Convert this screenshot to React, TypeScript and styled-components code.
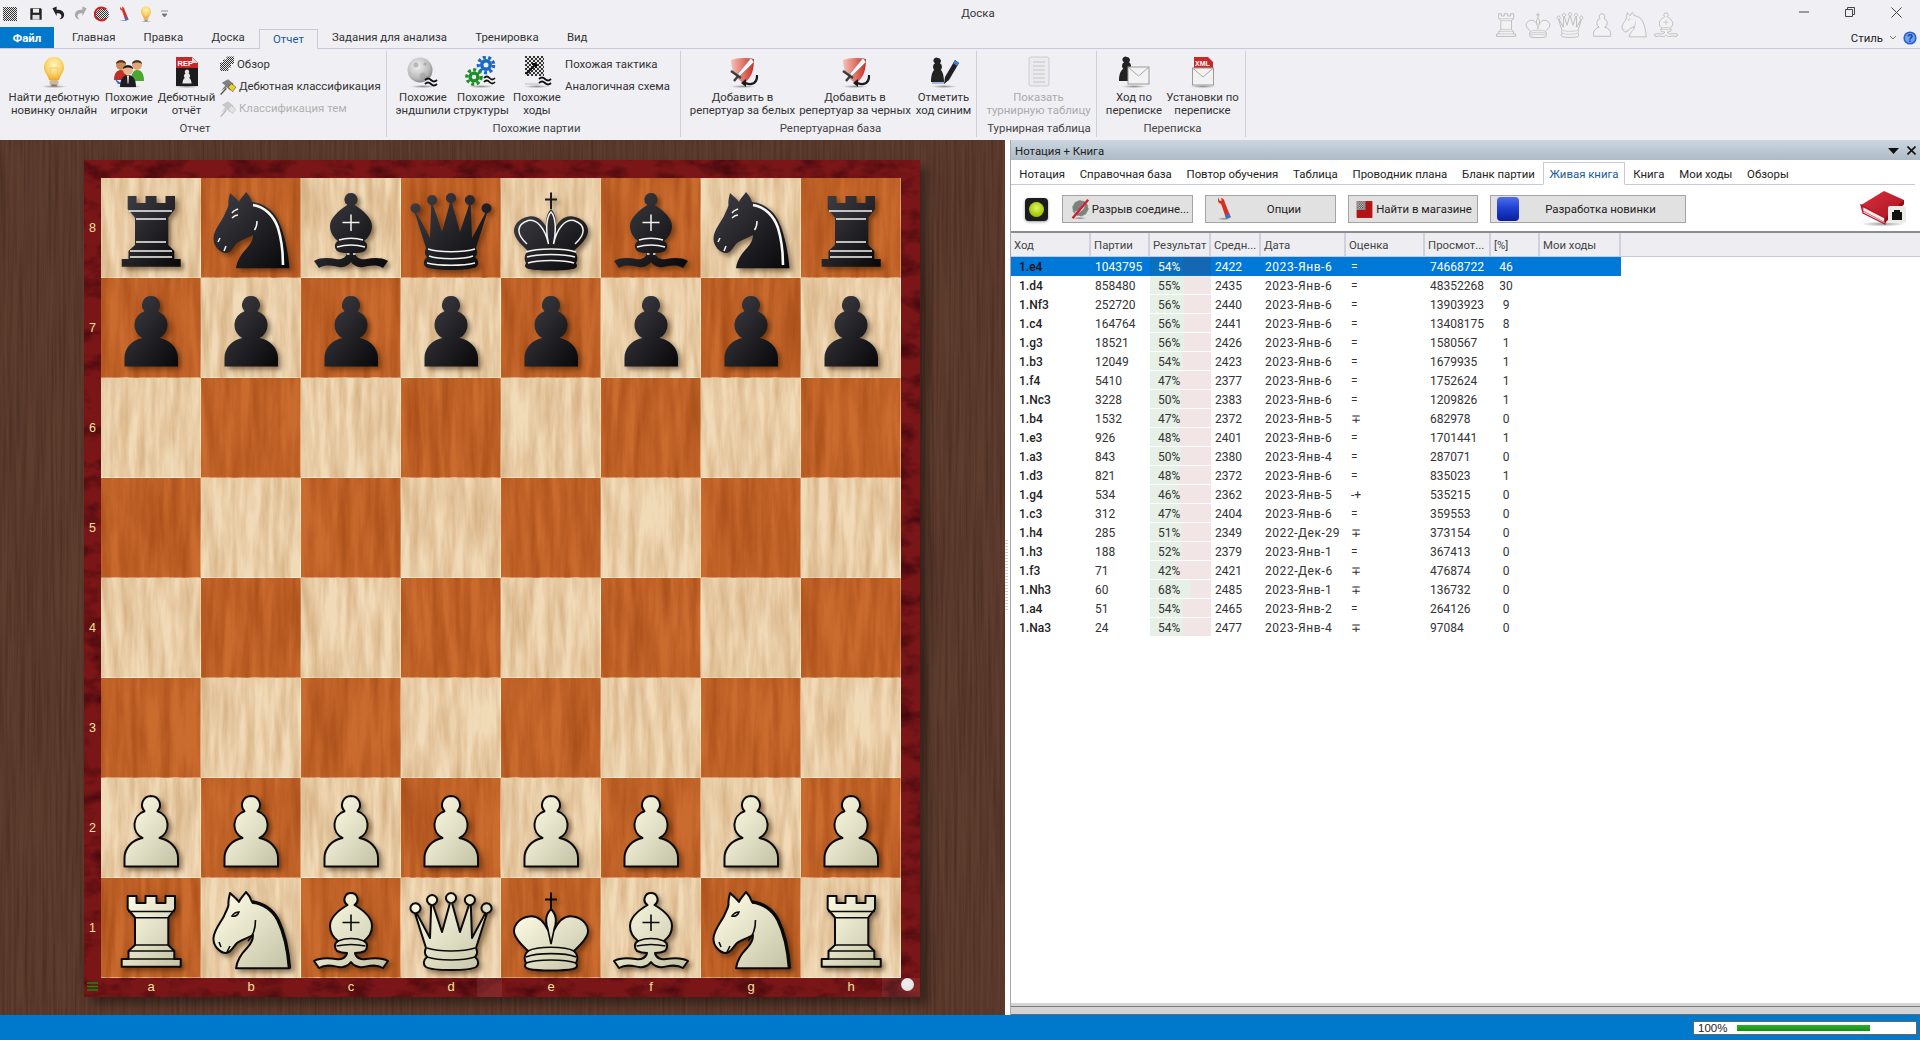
import React from "react";
import styled, { createGlobalStyle } from "styled-components";

const FONT = `Roboto, "Noto Sans", sans-serif`;
const LABEL = "11.4px";

const Global = createGlobalStyle`
  html, body { margin: 0; padding: 0; width: 100%; height: 100%; overflow: hidden; }
  body { font-family: ${FONT}; font-size: 12px; color: #222; background: #f0f0f4; }
  #root { width: 100%; height: 100%; }
`;

const Page = styled.div`display:flex;flex-direction:column;width:1920px;height:1040px;overflow:hidden;background:#f0f0f4;position:relative;`;

/* ---------- title bar ---------- */
const TitleBar = styled.div`display:grid;grid-template-columns:1fr auto 1fr;height:27px;background:#f0f0f4;align-items:center;`;
const Qat = styled.div`display:flex;align-items:center;height:24px;`;
const QatSlot = styled.div<{ $w?: number }>`width:${p => p.$w || 22}px;display:flex;justify-content:center;align-items:center;flex:none;`;
const WindowTitle = styled.div`padding-left:36px;font-size:${LABEL};color:#333;margin-top:-2px;`;
const WinControls = styled.div`display:flex;justify-content:flex-end;align-self:start;height:24px;`;
const WinBtn = styled.div`width:46.5px;display:flex;align-items:center;justify-content:center;`;
const GhostPieces = styled.div`position:absolute;left:1490px;top:8px;display:flex;`;
const Ghost = styled.svg`width:32px;height:32px;`;

/* ---------- ribbon tabs ---------- */
const TabRow = styled.div`display:flex;height:21px;align-items:flex-end;background:#f0f0f4;`;
const FileTab = styled.div`width:54px;height:21px;background:#0078cc;color:#fff;font-weight:700;font-size:${LABEL};display:flex;align-items:center;justify-content:center;`;
const TopTab = styled.div<{ $active?: boolean }>`
  height:20px;padding:0 13.1px 2px;
  display:flex;align-items:center;font-size:${LABEL};color:${p => (p.$active ? "#1a5a9c" : "#333")};
  box-sizing:border-box;position:relative;top:${p => (p.$active ? "1px" : "0")};
  ${p => p.$active ? "border:1px solid #c8c8dc;border-bottom:none;background:#f0f0f4;" : "border:1px solid transparent;"}
`;
const TabTail = styled.div`margin-left:auto;display:flex;align-items:center;gap:6px;padding-right:3px;height:21px;font-size:${LABEL};color:#222;`;

/* ---------- ribbon ---------- */
const Ribbon = styled.div`display:flex;height:92px;box-sizing:border-box;background:#f0f0f4;border-top:1px solid #c8c8dc;padding:2px 0 3px;`;
const Group = styled.div<{ $w: number; $pad?: number }>`
  width:${p => p.$w}px;box-sizing:border-box;border-right:1px solid #cfcfdc;padding-left:${p => p.$pad || 0}px;
  display:flex;flex-direction:column;
`;
const GroupBody = styled.div`flex:1;display:flex;padding-top:5px;`;
const GroupLabel = styled.div`height:18px;line-height:19px;text-align:center;font-size:${LABEL};color:#444;`;
const Big = styled.div<{ $w: number; $off?: boolean }>`
  width:${p => p.$w}px;display:flex;flex-direction:column;align-items:center;flex:none;
  color:${p => (p.$off ? "#aaa" : "#333")};
`;
const BigIcon = styled.div<{ $off?: boolean }>`height:32px;opacity:${p => (p.$off ? 0.4 : 1)};`;
const BigText = styled.div`margin-top:3px;font-size:${LABEL};line-height:13px;text-align:center;white-space:nowrap;`;
const SmallCol = styled.div`display:flex;flex-direction:column;margin-top:-3px;`;
const SmallRow = styled.div<{ $off?: boolean }>`
  height:22px;display:flex;align-items:center;gap:2px;font-size:${LABEL};white-space:nowrap;
  color:${p => (p.$off ? "#b0b0b0" : "#333")};
`;

/* ---------- main area ---------- */
const Main = styled.div`flex:1;display:flex;min-height:0;`;
const WoodArea = styled.div`width:1005px;position:relative;background:#5e3d2f;padding:20px 0 0 84px;box-sizing:border-box;overflow:hidden;`;
const Texture = styled.svg`position:absolute;left:0;top:0;width:100%;height:100%;display:block;`;
const Gutter = styled.div`width:5px;background:#fff;position:relative;`;
const Grip = styled.div`position:absolute;left:0;top:400px;width:3px;height:70px;background:repeating-linear-gradient(#ccc 0 1px,#fff 1px 3px);`;

const Frame = styled.div`
  position:relative;width:836px;height:837px;display:grid;grid-template-columns:17px 800px 19px;grid-template-rows:18px 800px 19px;
  background:#7a1618;box-shadow:7px 7px 9px rgba(0,0,0,.38);
`;
const RankRail = styled.div`grid-column:1;grid-row:2;display:grid;grid-template-rows:repeat(8,100px);position:relative;`;
const RailLabel = styled.div`display:flex;align-items:center;justify-content:center;color:#f3e29a;font-size:12.5px;font-family:"Liberation Sans",sans-serif;`;
const Board = styled.div`grid-column:2;grid-row:2;display:grid;grid-template-columns:repeat(8,100px);grid-template-rows:repeat(8,100px);position:relative;`;
const Square = styled.div<{ $light: boolean }>`
  position:relative;overflow:hidden;background:${p => (p.$light ? "#f1dab7" : "#cb6c2f")};
  box-shadow:inset -1px -1px 0 ${p => (p.$light ? "rgba(255,244,220,.9)" : "rgba(255,225,185,.65)")};
`;
const PieceSvg = styled.svg`position:absolute;left:0;top:0;width:100px;height:100px;filter:drop-shadow(3px 3px 2.5px rgba(40,20,0,.5));`;
const Corner = styled.div`grid-column:1;grid-row:3;display:flex;align-items:center;justify-content:center;position:relative;padding-bottom:2px;`;
const FileRail = styled.div`grid-column:2;grid-row:3;display:grid;grid-template-columns:repeat(8,100px);position:relative;`;
const FileLabel = styled(RailLabel)`font-size:13px;padding-bottom:3px;`;
const CornerRight = styled.div`grid-column:3;grid-row:3;position:relative;display:flex;align-items:center;justify-content:center;`;
const SideDot = styled.div`width:13px;height:13px;border-radius:50%;background:radial-gradient(circle at 45% 45%,#f2f2f2,#dcdcdc);position:absolute;left:0;top:0;`;
const Lights = styled.div`position:absolute;top:0;height:19px;background:rgba(255,255,255,.07);`;

const Panel = styled.div`flex:1;display:flex;flex-direction:column;border-left:1px solid #a8a8a8;background:#fff;min-width:0;`;
const PanelTitle = styled.div`height:20px;box-sizing:border-box;display:flex;align-items:center;background:linear-gradient(#cbd6e1,#aebbc6);padding:1px 0 0 4px;font-size:${LABEL};color:#222;`;
const PanelClose = styled.div`margin-left:auto;display:flex;align-items:center;gap:8px;padding-right:4px;`;
const PanelTabs = styled.div`height:25px;box-sizing:border-box;display:flex;align-items:flex-end;border-bottom:1px solid #c8c8dc;margin-right:5px;padding-left:1px;`;
const PanelTab = styled.div<{ $active?: boolean }>`
  height:${p => (p.$active ? "23px" : "22px")};box-sizing:border-box;padding:1px 5.85px 0;margin:0 0.5px;display:flex;align-items:center;font-size:${LABEL};white-space:nowrap;
  color:${p => (p.$active ? "#1a5a9c" : "#222")};position:relative;
  ${p => p.$active ? "border:1px solid #c8c8dc;border-bottom:1px solid #fff;top:1px;" : "border:1px solid transparent;"}
`;
const Toolbar = styled.div`height:48px;box-sizing:border-box;display:flex;align-items:center;padding:2px 14px 0;gap:12px;border-bottom:2px solid #8c8c8c;`;
const Led = styled.div`width:23px;height:23px;border-radius:4px;background:#1c1c1c;box-shadow:0 1px 3px rgba(0,0,0,.4);display:flex;align-items:center;justify-content:center;margin-right:2px;`;
const LedLamp = styled.div`width:15px;height:15px;border-radius:50%;background:radial-gradient(circle at 50% 40%,#e4f560,#9cc400 70%);`;
const ToolBtn = styled.div<{ $w: number }>`
  width:${p => p.$w}px;height:28px;box-sizing:border-box;border:1px solid #a4a4a4;background:#e1e1e1;display:flex;align-items:center;padding-left:6px;font-size:${LABEL};color:#222;
`;
const ToolBtnText = styled.div`flex:1;text-align:center;white-space:nowrap;padding-right:3px;`;
const BookWrap = styled.div`margin-left:auto;width:46px;height:38px;`;

const TABLE_COLS = "80px 59px 61px 50px 85px 79px 66px 49px 81px";
const HeadRow = styled.div`height:24px;box-sizing:border-box;display:grid;grid-template-columns:${TABLE_COLS} 1fr;background:#eeeef2;border-bottom:1px solid #c8c8dc;`;
const HeadCell = styled.div`padding-left:3px;display:flex;align-items:center;font-size:${LABEL};color:#444;border-right:2px solid #d0d0de;white-space:nowrap;overflow:hidden;&:last-child{border:none;}`;
const Rows = styled.div`flex:1;`;
const Row = styled.div<{ $sel?: boolean }>`
  height:19px;width:610px;display:grid;grid-template-columns:${TABLE_COLS};align-items:center;font-size:12px;
  background:${p => (p.$sel ? "#0078d7" : "transparent")};color:${p => (p.$sel ? "#fff" : "#333")};
`;
const Cell = styled.div<{ $pad?: number }>`padding-left:${p => p.$pad ?? 3}px;white-space:nowrap;`;
const DateCell = styled(Cell)`letter-spacing:.55px;`;
const MoveCell = styled(Cell)<{ $sel?: boolean }>`font-weight:500;color:${p => (p.$sel ? "#111" : "#222")};`;
const PctCell = styled.div`width:30px;text-align:center;`;
const ResultCell = styled.div<{ $sel?: boolean }>`
  height:18px;display:flex;position:relative;margin-bottom:1px;background:${p => (p.$sel ? "#1467b2" : "#f1e5e5")};
`;
const ResultFill = styled.div<{ $sel?: boolean }>`background:${p => (p.$sel ? "#0a70bd" : "#e6f0e6")};height:100%;`;
const ResultText = styled.div`position:absolute;left:8px;top:1px;line-height:18px;`;
const Splitter = styled.div`height:11px;background:#d4d4d4;border-top:0;position:relative;&::after{content:"";display:block;position:absolute;left:0;right:0;top:3px;height:1px;background:#7a7a7a;} border-bottom:1px solid #6a6a6a;`;

const StatusBar = styled.div`height:25px;background:#0078cc;display:flex;justify-content:flex-end;align-items:center;padding-right:3px;box-sizing:border-box;`;
const Progress = styled.div`width:224px;height:14px;box-sizing:border-box;background:#fff;border:1px solid #666;display:flex;align-items:center;padding-left:4px;font-family:"Liberation Sans",sans-serif;font-size:11.5px;color:#222;`;
const ProgressTrack = styled.div`margin-left:10px;width:133px;height:6px;background:linear-gradient(#28b028,#149014);`;

/* ---------- pieces ---------- */
type PieceKind = "p" | "r" | "n" | "b" | "q" | "k";
const PAWN = "M50 18a9 9 0 0 1 6.5 15.2a14.5 14.5 0 0 1 2 26.8C69 62 77 70 77 80V88.5H23.5V80C23.5 70 31 62 41.5 60a14.5 14.5 0 0 1 2-26.8A9 9 0 0 1 50 18Z";
const ROOK = "M26.7 18H35.5V25H44.5V18H55.5V25H64.5V18H74V31L67.3 39.5V67L73.3 73V81H79.7V88.7H20.7V81H27.5V73L34 67V39.5L26.7 31Z";
const KNIGHT = "M35 90.3C36 82 41 75 46 70C50 66 52 61 52 57C47 60 40 62 36 65C32 69 30 75 25 75C19 75 12 68 12.5 60C13 52 20 44 23 38C25 33 27 30 27.5 27C27 23 28 19 29 15C32 18 36 21 38 24C39 21 43 17 45 14C48 17 50 21 51 24C62 25 72 32 77 42C83 54 87 72 88.5 90.3Z";
const BISHOP = "M50 15a6.5 6.5 0 0 1 3.5 12C62 32 71 40 71 48C71 55 67 60 63 63C67 65 67 70 64 73C60 75 56 75 54 75C55 80 60 82 65 81C72 80 80 79 87 83L82 90C75 86 68 88 62 89C57 90 52 87 50 84C48 87 43 90 38 89C32 88 25 86 18 90L13 83C20 79 28 80 35 81C40 82 45 80 46 75C44 75 40 75 36 73C33 70 33 65 37 63C33 60 29 55 29 48C29 40 38 32 46.5 27A6.5 6.5 0 0 1 50 15Z";
const QUEEN = "M14 35.2a5 5 0 1 1 1.6-.1L29 60L30.2 26.9a5 5 0 1 1 1.8 0L41 54L49 24.9a5 5 0 1 1 2 0L59 54L68 26.9a5 5 0 1 1 1.8 0L71 60L84.4 35.1a5 5 0 1 1 1.6.1L75 70C77 74 76 77 74 79C78 82 78 87 75 89C68 93 32 93 25 89C22 87 22 82 26 79C24 77 23 74 25 70Z";
const KING = "M50 31C45 36 44 44 47 52C42 42 36 37 28 38.5C18 40 11 48 13.5 56C15 62 22 68 27 73C23 76 23 82 25 85C23 88 24 90 28 91C38 93 62 93 72 91C76 90 77 88 75 85C77 82 77 76 73 73C78 68 85 62 86.5 56C89 48 82 40 72 38.5C64 37 58 42 53 52C56 44 55 36 50 31Z";
const KING_CROSS = "M50 14.5V31M44 21.5H56";

const shape: Record<PieceKind, string> = { p: PAWN, r: ROOK, n: KNIGHT, b: BISHOP, q: QUEEN, k: KING };
const whiteDetail: Record<PieceKind, string> = {
  p: "",
  r: "M27 33.5H74M34 39.7H67.3M34 67H67.3M28 73H73M28 81H73",
  n: "M54.5 42C54.5 52 52 58 47 63M18 64L20 69M26 74L29 68M31 38C33 35 36 34 38 34C37 37 34 39 31 38Z",
  b: "M50 36.5V53M41.5 44.5H58.5M37 63C45 60 55 60 63 63M35.5 68C45 66 55 66 64.5 68",
  q: "M26 70C38 74 62 74 74 70M26 79C38 83 62 83 74 79",
  k: "M47 52L50 66L53 52M27 73C36 68 64 68 73 73M25 79C36 74.5 64 74.5 75 79M25 85C36 81 64 81 75 85",
};
const blackDetail: Record<PieceKind, string> = {
  p: "",
  r: "M28 33H71M35 41H65M35 64H65M29 73H71M29 79H71",
  n: "M31 35C33 32 35 32 37 31M56 43C56 47 55 50 53.5 52M19 60L17 64M25 68L23 73M31 40C33 38 35 37 37 37",
  b: "M50 36.5V53M41.5 44.5H58.5M38 62C45 59.5 55 59.5 62 62M36 69C45 66.5 55 66.5 64 69M46 76H48.5M52 76H54.5",
  q: "M27 71C38 74.5 62 74.5 74 71M28 78C38 81.5 62 81.5 72 78M26 85C38 88 62 88 74 85",
  k: "M26 66C16 57 14 47 27 42.5C36 41 44 50 47.5 66M74 66C84 57 86 47 73 42.5C64 41 56 50 52.5 66M47.5 66C44 50 46 38 50 34C54 38 56 50 52.5 66M25 74C36 70 64 70 75 74M26 79C36 75.5 64 75.5 74 79M27 85C36 81.5 64 81.5 73 85",
};

const Piece = ({ kind, white }: { kind: PieceKind; white: boolean }) => (
  <PieceSvg viewBox="0 0 100 100">
    {kind === "k" && <path d={KING_CROSS} fill="none" stroke={white ? "#0a0a0a" : "#1c1c20"} strokeWidth="2" />}
    <path d={shape[kind]} fill={white ? "url(#pw)" : "url(#pb)"} stroke={white ? "#0a0a0a" : "none"} strokeWidth="2" strokeLinejoin="round" />
    <path d={white ? whiteDetail[kind] : blackDetail[kind]} fill="none" stroke={white ? "#0a0a0a" : "#f4f4f0"} strokeWidth={white ? 1.6 : 1.5} />
    {white && kind === "n" && <path d="M51 24C62 25 72 32 77 42C83 54 87 72 88.5 90.3" fill="none" stroke="#0a0a0a" strokeWidth="3.4" />}
    {!white && kind === "n" && <path d="M52 27C64 29 73 38 77 50C80 60 82 75 82 87" fill="none" stroke="#f8f8f4" strokeWidth="2.6" />}
  </PieceSvg>
);

const GhostPiece = ({ kind }: { kind: PieceKind }) => (
  <Ghost viewBox="0 0 100 100">
    {kind === "k" && <path d={KING_CROSS} fill="none" stroke="#bcbcbc" strokeWidth="3" />}
    <path d={shape[kind]} fill="#f2f2f4" stroke="#bcbcbc" strokeWidth="3" strokeLinejoin="round" />
    <path d={whiteDetail[kind]} fill="none" stroke="#c4c4c4" strokeWidth="2.4" />
  </Ghost>
);

/* ---------- shared svg defs ---------- */
const DefsSvg = styled.svg`position:absolute;width:0;height:0;overflow:hidden;`;
const Defs = () => (
  <DefsSvg aria-hidden="true">
    <defs>
      <linearGradient id="pw" x1="0.1" y1="0.1" x2="1" y2="1"><stop offset="0" stopColor="#fbf9e2" /><stop offset="1" stopColor="#c4c2a4" /></linearGradient>
      <linearGradient id="pb" x1="0" y1="0" x2="1" y2="1"><stop offset="0" stopColor="#3f3f46" /><stop offset="1" stopColor="#08080a" /></linearGradient>
      <radialGradient id="bulb" cx="0.5" cy="0.35" r="0.65"><stop offset="0" stopColor="#fff4c4" /><stop offset="0.6" stopColor="#fbd56a" /><stop offset="1" stopColor="#f3a51e" /></radialGradient>
      <radialGradient id="moon" cx="0.4" cy="0.35" r="0.7"><stop offset="0" stopColor="#f2f2f2" /><stop offset="0.7" stopColor="#b8b8b8" /><stop offset="1" stopColor="#7c7c7c" /></radialGradient>
      <linearGradient id="shieldG" x1="0" y1="0" x2="1" y2="0"><stop offset="0" stopColor="#f2c4ba" /><stop offset="0.5" stopColor="#e4786c" /><stop offset="1" stopColor="#c43028" /></linearGradient>
      <linearGradient id="btnBlue" x1="0" y1="0" x2="0" y2="1"><stop offset="0" stopColor="#4f6fe8" /><stop offset="0.5" stopColor="#1c3dcf" /><stop offset="1" stopColor="#0a1f9a" /></linearGradient>
      <linearGradient id="bookG" x1="0" y1="0" x2="1" y2="1"><stop offset="0" stopColor="#d8303c" /><stop offset="1" stopColor="#a81020" /></linearGradient>
      <radialGradient id="shadowE"><stop offset="0" stopColor="rgba(0,0,0,.4)" /><stop offset="1" stopColor="rgba(0,0,0,0)" /></radialGradient>
      <pattern id="chk" width="4" height="4" patternUnits="userSpaceOnUse"><rect width="4" height="4" fill="#e6e6e6" /><rect width="2" height="2" fill="#333" /><rect x="2" y="2" width="2" height="2" fill="#333" /></pattern>
      {Array.from({ length: 64 }, (_, i) => {
        const light = (Math.floor(i / 8) + i % 8) % 2 === 0;
        return (
          <filter key={i} id={`sq${i}`} x="0" y="0" width="100%" height="100%" colorInterpolationFilters="sRGB">
            <feTurbulence type="fractalNoise" baseFrequency={light ? "0.11 0.014" : "0.10 0.01"} numOctaves="4" seed={i + 3} />
            <feColorMatrix type="matrix" values={light
              ? "0 0 0 0 0.78  0 0 0 0 0.6  0 0 0 0 0.4  1.1 0 0 0 -0.33"
              : "0 0 0 0 0.62  0 0 0 0 0.27  0 0 0 0 0.07  1.2 0 0 0 -0.32"} />
          </filter>
        );
      })}
      <filter id="woodBg" x="0" y="0" width="100%" height="100%" colorInterpolationFilters="sRGB">
        <feTurbulence type="fractalNoise" baseFrequency="0.35 0.008" numOctaves="3" seed="8" />
        <feColorMatrix type="matrix" values="0 0 0 0 0.22  0 0 0 0 0.12  0 0 0 0 0.08  0.9 0 0 0 -0.3" />
      </filter>
      <filter id="frameTex" x="0" y="0" width="100%" height="100%" colorInterpolationFilters="sRGB">
        <feTurbulence type="fractalNoise" baseFrequency="0.035 0.06" numOctaves="4" seed="12" />
        <feColorMatrix type="matrix" values="0 0 0 0 0.26  0 0 0 0 0.03  0 0 0 0 0.05  2.2 0 0 0 -0.95" />
      </filter>
    </defs>
  </DefsSvg>
);

/* ---------- icons ---------- */
const Ico = ({ s = 32, children }: { s?: number; children: React.ReactNode }) => (
  <svg width={s} height={s} viewBox="0 0 32 32" style={{ display: "block" }}>{children}</svg>
);
const Floor = () => <ellipse cx="16" cy="30.5" rx="13" ry="1.6" fill="url(#shadowE)" />;
const Approx = ({ x, y, w = 9 }: { x: number; y: number; w?: number }) => (
  <g fill="none" stroke="#111" strokeWidth="1.8">
    <path d={`M${x} ${y}q${w / 4} -3 ${w / 2} 0t${w / 2} 0`} />
    <path d={`M${x} ${y + 4}q${w / 4} -3 ${w / 2} 0t${w / 2} 0`} />
  </g>
);
const Bulb = ({ s = 32 }: { s?: number }) => (
  <Ico s={s}>
    <Floor />
    <path d="M16 1C9.5 1 6 6 6 11.5C6 16.5 10 19 11 24H21C22 19 26 16.5 26 11.5C26 6 22.5 1 16 1Z" fill="url(#bulb)" />
    <path d="M13 23L12 12M19 23L20 12M12 12L20 12" stroke="#f0c070" strokeWidth=".8" fill="none" />
    <rect x="11.5" y="24" width="9" height="5" rx="1.5" fill="#c9b89a" />
    <rect x="13" y="28.5" width="6" height="1.8" rx=".9" fill="#8c7a60" />
  </Ico>
);
const People = () => (
  <Ico>
    <Floor />
    <circle cx="8" cy="9" r="5" fill="#c98a58" /><path d="M3 8C3 3 13 3 13 8C10 6 6 6 3 8Z" fill="#5a3418" />
    <path d="M1 24C1 16 5 14 8 14C11 14 14 17 14 24Z" fill="#c03028" />
    <circle cx="24" cy="9" r="5" fill="#e2a87a" /><path d="M19 8C19 3 29 3 29 8C26 6 22 6 19 8Z" fill="#3a3a20" />
    <path d="M18 25C18 17 21 14 24 14C28 14 31 17 31 25Z" fill="#48a830" />
    <path d="M1 22L9 28H5Z" fill="#2c6ac8" />
    <circle cx="15" cy="14" r="5" fill="#e8b48c" /><path d="M10 13C10 8 20 8 20 13C17 11 13 11 10 13Z" fill="#16161a" />
    <path d="M7 31C7 22 11 19 15 19C19 19 23 22 23 31Z" fill="#1c1c22" />
    <path d="M14 19.5H16L15.5 27L15 28L14.5 27Z" fill="#e8e8e8" />
  </Ico>
);
const Report = () => (
  <Ico>
    <Floor />
    <path d="M5 1H21L27 7V30H5Z" fill="#1c1c1c" />
    <path d="M5 1H21L27 7V12H5Z" fill="#c82828" />
    <path d="M21 1L27 7H21Z" fill="#f2d0d0" />
    <text x="6.5" y="9.5" fontSize="7.5" fontWeight="700" fill="#fff" fontFamily="Liberation Sans, sans-serif">REP</text>
    <path d={"M16 13.5a2.4 2.4 0 0 1 1.6 4a3.2 3.2 0 0 1 .6 4.6C19.6 23 20.4 25 20.6 27.5H11.4C11.6 25 12.4 23 13.8 22.1a3.2 3.2 0 0 1 .6-4.6a2.4 2.4 0 0 1 1.6-4Z"} fill="#e8e8e8" />
  </Ico>
);
const Overview = () => (
  <Ico s={16}>
    <rect x="15" y="1" width="15" height="15" fill="url(#chk)" />
    <rect x="8" y="7" width="16" height="16" fill="url(#chk)" />
    <rect x="2" y="13" width="17" height="17" fill="url(#chk)" />
  </Ico>
);
const Pin = ({ off }: { off?: boolean }) => (
  <Ico s={18}>
    <g opacity={off ? 0.35 : 1}>
      <path d="M5 10L16 4L26 12L20 24L14 18L4 24L11 15Z" fill="#808080" />
      <path d="M16 18L22 12L30 18L24 26Z" fill={off ? "#ccc" : "#f0d020"} stroke="#333" strokeWidth=".9" />
      <path d="M3 31L13 20" stroke="#555" strokeWidth="2.4" />
    </g>
  </Ico>
);
const Moon = () => (
  <Ico>
    <circle cx="13" cy="14" r="12.5" fill="url(#moon)" />
    <circle cx="9" cy="9" r="2.5" fill="#9a9a9a" opacity=".6" /><circle cx="16" cy="20" r="3.5" fill="#9a9a9a" opacity=".5" /><circle cx="18" cy="8" r="1.6" fill="#aaa" />
    <Floor />
    <Approx x={18} y={24} w={12} />
  </Ico>
);
const Gear = ({ cx, cy, r, c }: { cx: number; cy: number; r: number; c: string }) => (
  <g>
    <circle cx={cx} cy={cy} r={r + 1.6} fill="none" stroke={c} strokeWidth="3.4" strokeDasharray="3 2.4" />
    <circle cx={cx} cy={cy} r={r} fill={c} />
    <circle cx={cx} cy={cy} r={r * 0.42} fill="#e8f0f4" />
  </g>
);
const Gears = () => (
  <Ico>
    <Floor />
    <Gear cx={21} cy={9} r={6} c="#1868c8" />
    <Gear cx={9} cy={21} r={5.5} c="#1e8c28" />
    <Approx x={19} y={22} w={11} />
  </Ico>
);
const Checker = () => (
  <Ico>
    <Floor />
    <rect x="4" y="0" width="19" height="20" fill="url(#chk)" />
    <path d="M5 18L15 8M15 8L11 8M15 8L15 12" stroke="#111" strokeWidth="2" fill="none" />
    <Approx x={18} y={23} w={12} />
    <path d="M4 28H18" stroke="#bbb" strokeWidth="1" />
  </Ico>
);
const ShieldIcon = () => (
  <Ico>
    <Floor />
    <path d="M4 4C9 2 19 1 27 3C27 13 25 22 17 27C9 24 4 14 4 4Z" fill="url(#shieldG)" />
    <path d="M24 2L9 20L11 22L27 6Z" fill="#f4f4f4" stroke="#777" strokeWidth=".5" />
    <path d="M4 15L14 22M7 25L12 19" stroke="#3c3c3c" strokeWidth="2.4" />
    <path d="M29 19C29 27 24 28 19 26L19 23L14 27L19 31L19 28.5C26 31 32 27 31 19Z" fill="#1a1a1a" />
  </Ico>
);
const PawnPen = () => (
  <Ico>
    <Floor />
    <path d="M10 2a3 3 0 0 1 2 5.2a4.3 4.3 0 0 1 .8 6.6C15 16 16 21 16 26H3C3 21 4 16 6.2 13.8a4.3 4.3 0 0 1 .8-6.6A3 3 0 0 1 10 2Z" fill="#222" />
    <path d="M4 27H17" stroke="#5a7ad8" strokeWidth="1" />
    <path d="M27 4L31 7L21 24L16 28L17 21Z" fill="#202026" />
    <path d="M27 4L31 7L29 10L25 7Z" fill="#3a80d8" />
  </Ico>
);
const ListDoc = () => (
  <Ico>
    <rect x="6" y="1" width="20" height="29" rx="2" fill="#e4e4e4" stroke="#999" />
    <path d="M10 6H22M10 10H22M10 14H22M10 18H22M10 22H22M10 26H22" stroke="#888" strokeWidth="1.1" />
  </Ico>
);
const Envelope = ({ x, y }: { x: number; y: number }) => (
  <g transform={`translate(${x} ${y})`}>
    <rect width="21" height="17" fill="#f2f2f2" stroke="#9a9a9a" />
    <path d="M0 0L10.5 9L21 0" fill="none" stroke="#aaa" />
  </g>
);
const PawnMail = () => (
  <Ico>
    <Floor />
    <path d="M9 1a3 3 0 0 1 2 5.2a4.3 4.3 0 0 1 .8 6.6C14 15 15 20 15 25H1C1 20 2 15 5.2 12.8a4.3 4.3 0 0 1 .8-6.6A3 3 0 0 1 9 1Z" fill="#222" />
    <Envelope x={10} y={11} />
  </Ico>
);
const XmlMail = () => (
  <Ico>
    <Floor />
    <path d="M7 1H21L26 6V14H7Z" fill="#c82828" />
    <text x="8" y="10" fontSize="7" fontWeight="700" fill="#fff" fontFamily="Liberation Sans, sans-serif">XML</text>
    <Envelope x={5.5} y={12} />
  </Ico>
);
const Floppy = () => (
  <Ico s={14}>
    <path d="M3 3H27L29 5V29H3Z" fill="#222" /><rect x="9" y="4" width="14" height="9" fill="#eee" /><rect x="8" y="18" width="16" height="11" fill="#ddd" />
  </Ico>
);
const Undo = ({ c }: { c: string }) => (
  <Ico s={15}>
    <path d="M3 5L12 1V8C20 7 28 11 28 19C28 24 24 28 18 28C23 25 23 21 21 18C18 15 15 15 12 16V22Z" fill={c} />
  </Ico>
);
const Redo = ({ c }: { c: string }) => (
  <Ico s={15}>
    <g transform="translate(32 0) scale(-1 1)"><path d="M3 5L12 1V8C20 7 28 11 28 19C28 24 24 28 18 28C23 25 23 21 21 18C18 15 15 15 12 16V22Z" fill={c} /></g>
  </Ico>
);
const LogoC = () => (
  <Ico s={16}>
    <circle cx="16" cy="16" r="14" fill="url(#chk)" />
    <path d="M24 7A13 13 0 1 0 24 25" fill="none" stroke="#d02020" strokeWidth="4" />
  </Ico>
);
const Wrench = ({ s = 16 }: { s?: number }) => (
  <Ico s={s}>
    <ellipse cx="16" cy="29" rx="9" ry="2" fill="url(#shadowE)" />
    <path d="M9 1C7 5 8 8 12 9L19 29L25 27L17 7C17 4 15 2 12 1L13 5L10 5Z" fill="#d83020" />
    <path d="M19 29L25 27L23 22L17 24Z" fill="#3a70c8" />
  </Ico>
);
const ChainOff = () => (
  <Ico s={26}>
    <circle cx="16" cy="15" r="11" fill="#808080" />
    <circle cx="16" cy="15" r="11" fill="none" stroke="#3fae3f" strokeWidth="1" strokeDasharray="3 4" />
    <path d="M9 20C14 22 22 14 20 9" stroke="#e0e0e0" strokeWidth="3" fill="none" />
    <path d="M5 29L27 3" stroke="#d02030" strokeWidth="3.4" />
    <ellipse cx="15" cy="29" rx="10" ry="2" fill="url(#shadowE)" />
  </Ico>
);
const StoreChk = () => (
  <Ico s={19}>
    <rect x="3" y="2" width="26" height="28" fill="#c01818" />
    <rect x="3" y="2" width="15" height="15" fill="url(#chk)" />
    <path d="M18 2H29V30H3V17H18Z" fill="#b01414" />
  </Ico>
);
const BookIcon = () => (
  <svg width="46" height="38" viewBox="0 0 46 38" style={{ display: "block" }}>
    <ellipse cx="23" cy="34" rx="22" ry="2.5" fill="url(#shadowE)" />
    <path d="M1 15L24 1L44 10V14L25 32L3 21Z" fill="url(#bookG)" />
    <path d="M3 17L25 28L24 32L3 21Z" fill="#fbeaea" stroke="#c02030" strokeWidth=".6" />
    <path d="M1 15L3 23L25 34L25 28Z" fill="none" stroke="#b01828" strokeWidth="1.2" />
    <path d="M25 28L44 10V14L25 33Z" fill="#8e0c18" />
    <rect x="28" y="16" width="18" height="17" rx="2" fill="#ecece6" />
    <path d="M32 30V22H34V20H40V22H42V30Z" fill="#111" />
  </svg>
);
const Help = () => (
  <svg width="14" height="14" viewBox="0 0 14 14" style={{ display: "block" }}>
    <circle cx="7" cy="7" r="6.6" fill="#2a62d0" />
    <circle cx="7" cy="7" r="5" fill="#6fa4f0" />
    <text x="7" y="10.5" textAnchor="middle" fontSize="10" fontWeight="700" fill="#123c9c" fontFamily="Liberation Sans, sans-serif">?</text>
  </svg>
);
const Line = styled.svg`display:block;`;

/* ---------- data ---------- */
const BACK: PieceKind[] = ["r", "n", "b", "q", "k", "b", "n", "r"];
const FILES = ["a", "b", "c", "d", "e", "f", "g", "h"];

const pieceAt = (row: number, col: number): { kind: PieceKind; white: boolean } | null => {
  if (row === 0) return { kind: BACK[col], white: false };
  if (row === 1) return { kind: "p", white: false };
  if (row === 6) return { kind: "p", white: true };
  if (row === 7) return { kind: BACK[col], white: true };
  return null;
};

type Move = [string, number, number, number, string, string, number, number];
const MOVES: Move[] = [
  ["1.e4", 1043795, 54, 2422, "2023-Янв-6", "=", 74668722, 46],
  ["1.d4", 858480, 55, 2435, "2023-Янв-6", "=", 48352268, 30],
  ["1.Nf3", 252720, 56, 2440, "2023-Янв-6", "=", 13903923, 9],
  ["1.c4", 164764, 56, 2441, "2023-Янв-6", "=", 13408175, 8],
  ["1.g3", 18521, 56, 2426, "2023-Янв-6", "=", 1580567, 1],
  ["1.b3", 12049, 54, 2423, "2023-Янв-6", "=", 1679935, 1],
  ["1.f4", 5410, 47, 2377, "2023-Янв-6", "=", 1752624, 1],
  ["1.Nc3", 3228, 50, 2383, "2023-Янв-6", "=", 1209826, 1],
  ["1.b4", 1532, 47, 2372, "2023-Янв-5", "∓", 682978, 0],
  ["1.e3", 926, 48, 2401, "2023-Янв-6", "=", 1701441, 1],
  ["1.a3", 843, 50, 2380, "2023-Янв-4", "=", 287071, 0],
  ["1.d3", 821, 48, 2372, "2023-Янв-6", "=", 835023, 1],
  ["1.g4", 534, 46, 2362, "2023-Янв-5", "-+", 535215, 0],
  ["1.c3", 312, 47, 2404, "2023-Янв-6", "=", 359553, 0],
  ["1.h4", 285, 51, 2349, "2022-Дек-29", "∓", 373154, 0],
  ["1.h3", 188, 52, 2379, "2023-Янв-1", "=", 367413, 0],
  ["1.f3", 71, 42, 2421, "2022-Дек-6", "∓", 476874, 0],
  ["1.Nh3", 60, 68, 2485, "2023-Янв-1", "∓", 136732, 0],
  ["1.a4", 51, 54, 2465, "2023-Янв-2", "=", 264126, 0],
  ["1.Na3", 24, 54, 2477, "2023-Янв-4", "∓", 97084, 0],
];
const HEADS = ["Ход", "Партии", "Результат", "Средн...", "Дата", "Оценка", "Просмот...", "[%]", "Мои ходы", ""];
const TOP_TABS = ["Главная", "Правка", "Доска", "Отчет", "Задания для анализа", "Тренировка", "Вид"];
const PANEL_TABS = ["Нотация", "Справочная база", "Повтор обучения", "Таблица", "Проводник плана", "Бланк партии", "Живая книга", "Книга", "Мои ходы", "Обзоры"];

const BigButton = ({ w, icon, lines, off }: { w: number; icon: React.ReactNode; lines: [string, string]; off?: boolean }) => (
  <Big $w={w} $off={off}>
    <BigIcon $off={off}>{icon}</BigIcon>
    <BigText>{lines[0]}<br />{lines[1]}</BigText>
  </Big>
);

export default function App() {
  return (
    <Page>
      <Global />
      <Defs />
      <TitleBar>
        <Qat>
          <QatSlot $w={20}><Ico s={16}><rect x="2" y="2" width="28" height="28" fill="url(#chk)" /></Ico></QatSlot>
          <QatSlot $w={5} />
          <QatSlot><Floppy /></QatSlot>
          <QatSlot><Undo c="#222" /></QatSlot>
          <QatSlot><Redo c="#aaa" /></QatSlot>
          <QatSlot><LogoC /></QatSlot>
          <QatSlot><Wrench /></QatSlot>
          <QatSlot><Bulb s={16} /></QatSlot>
          <QatSlot $w={14}><Line width="7" height="8" viewBox="0 0 7 8"><path d="M0 1H7M1 4H6L3.5 7Z" stroke="#777" fill="#777" strokeWidth=".8" /></Line></QatSlot>
        </Qat>
        <WindowTitle>Доска</WindowTitle>
        <WinControls>
          <WinBtn><Line width="10" height="10" viewBox="0 0 10 10"><path d="M0 5H10" stroke="#444" /></Line></WinBtn>
          <WinBtn><Line width="10" height="10" viewBox="0 0 10 10"><path d="M.5 2.5H7.5V9.5H.5ZM2.5 2.5V.5H9.5V7.5H7.5" stroke="#444" fill="none" /></Line></WinBtn>
          <WinBtn><Line width="11" height="11" viewBox="0 0 11 11"><path d="M.5 .5L10.5 10.5M10.5 .5L.5 10.5" stroke="#444" /></Line></WinBtn>
        </WinControls>
      </TitleBar>
      <GhostPieces>
        {(["r", "k", "q", "p", "n", "b"] as PieceKind[]).map((k, i) => <GhostPiece key={i} kind={k} />)}
      </GhostPieces>

      <TabRow>
        <FileTab>Файл</FileTab>
        <span style={{ width: 4 }} />
        {TOP_TABS.map(t => <TopTab key={t} $active={t === "Отчет"}>{t}</TopTab>)}
        <TabTail>
          <span>Стиль</span>
          <Line width="8" height="6" viewBox="0 0 8 6"><path d="M1 1L4 4L7 1" stroke="#777" fill="none" /></Line>
          <Help />
        </TabTail>
      </TabRow>

      <Ribbon>
        <Group $w={387} $pad={4}>
          <GroupBody>
            <BigButton w={100} icon={<Bulb />} lines={["Найти дебютную", "новинку онлайн"]} />
            <BigButton w={50} icon={<People />} lines={["Похожие", "игроки"]} />
            <BigButton w={65} icon={<Report />} lines={["Дебютный", "отчёт"]} />
            <SmallCol>
              <SmallRow><Overview /><span>Обзор</span></SmallRow>
              <SmallRow><Pin /><span>Дебютная классификация</span></SmallRow>
              <SmallRow $off><Pin off /><span>Классификация тем</span></SmallRow>
            </SmallCol>
          </GroupBody>
          <GroupLabel>Отчет</GroupLabel>
        </Group>
        <Group $w={294} $pad={6}>
          <GroupBody>
            <BigButton w={60} icon={<Moon />} lines={["Похожие", "эндшпили"]} />
            <BigButton w={56} icon={<Gears />} lines={["Похожие", "структуры"]} />
            <BigButton w={56} icon={<Checker />} lines={["Похожие", "ходы"]} />
            <SmallCol>
              <SmallRow><span>Похожая тактика</span></SmallRow>
              <SmallRow><span>Аналогичная схема</span></SmallRow>
            </SmallCol>
          </GroupBody>
          <GroupLabel>Похожие партии</GroupLabel>
        </Group>
        <Group $w={296} $pad={4}>
          <GroupBody>
            <BigButton w={115} icon={<ShieldIcon />} lines={["Добавить в", "репертуар за белых"]} />
            <BigButton w={110} icon={<ShieldIcon />} lines={["Добавить в", "репертуар за черных"]} />
            <BigButton w={67} icon={<PawnPen />} lines={["Отметить", "ход синим"]} />
          </GroupBody>
          <GroupLabel>Репертуарная база</GroupLabel>
        </Group>
        <Group $w={120} $pad={5}>
          <GroupBody>
            <BigButton w={113} off icon={<ListDoc />} lines={["Показать", "турнирную таблицу"]} />
          </GroupBody>
          <GroupLabel>Турнирная таблица</GroupLabel>
        </Group>
        <Group $w={149} $pad={3}>
          <GroupBody>
            <BigButton w={68} icon={<PawnMail />} lines={["Ход по", "переписке"]} />
            <BigButton w={69} icon={<XmlMail />} lines={["Установки по", "переписке"]} />
          </GroupBody>
          <GroupLabel>Переписка</GroupLabel>
        </Group>
      </Ribbon>

      <Main>
        <WoodArea>
          <Texture><rect width="100%" height="100%" filter="url(#woodBg)" /></Texture>
          <Frame>
            <Texture><rect width="100%" height="100%" filter="url(#frameTex)" /></Texture>
            <RankRail>
              {[8, 7, 6, 5, 4, 3, 2, 1].map(r => <RailLabel key={r}>{r}</RailLabel>)}
            </RankRail>
            <Board>
              {Array.from({ length: 64 }, (_, i) => {
                const row = Math.floor(i / 8);
                const col = i % 8;
                const light = (row + col) % 2 === 0;
                const p = pieceAt(row, col);
                return (
                  <Square key={i} $light={light}>
                    <Texture><rect width="100%" height="100%" filter={`url(#sq${i})`} /></Texture>
                    {p && <Piece kind={p.kind} white={p.white} />}
                  </Square>
                );
              })}
            </Board>
            <Corner>
              <Line width="11" height="9" viewBox="0 0 11 9"><path d="M0 1H11M0 4.5H11M0 8H11" stroke="#0c8c0c" strokeWidth="1.6" /></Line>
            </Corner>
            <FileRail>
              {FILES.map(f => <FileLabel key={f}>{f}</FileLabel>)}
              <Lights style={{ left: 376, width: 25 }} />
              <Lights style={{ left: 781, width: 19 }} />
            </FileRail>
            <CornerRight><Lights style={{ left: 0, width: 19 }} /><SideDot /></CornerRight>
          </Frame>
        </WoodArea>
        <Gutter><Grip /></Gutter>
        <Panel>
          <PanelTitle>
            Нотация + Книга
            <PanelClose>
              <Line width="11" height="6" viewBox="0 0 11 6"><path d="M0 0H11L5.5 6Z" fill="#111" /></Line>
              <Line width="9" height="9" viewBox="0 0 9 9"><path d="M.5 .5L8.5 8.5M8.5 .5L.5 8.5" stroke="#111" strokeWidth="1.6" /></Line>
            </PanelClose>
          </PanelTitle>
          <PanelTabs>
            {PANEL_TABS.map(t => <PanelTab key={t} $active={t === "Живая книга"}>{t}</PanelTab>)}
          </PanelTabs>
          <Toolbar>
            <Led><LedLamp /></Led>
            <ToolBtn $w={131}><ChainOff /><ToolBtnText>Разрыв соедине...</ToolBtnText></ToolBtn>
            <ToolBtn $w={131}><Wrench s={24} /><ToolBtnText>Опции</ToolBtnText></ToolBtn>
            <ToolBtn $w={130}><StoreChk /><ToolBtnText>Найти в магазине</ToolBtnText></ToolBtn>
            <ToolBtn $w={196}>
              <Line width="22" height="24" viewBox="0 0 22 24"><rect width="22" height="24" rx="4" fill="url(#btnBlue)" /></Line>
              <ToolBtnText>Разработка новинки</ToolBtnText>
            </ToolBtn>
            <BookWrap><BookIcon /></BookWrap>
          </Toolbar>
          <HeadRow>
            {HEADS.map((h, i) => <HeadCell key={i}>{h}</HeadCell>)}
          </HeadRow>
          <Rows>
            {MOVES.map((m, i) => {
              const sel = i === 0;
              return (
                <Row key={m[0]} $sel={sel}>
                  <MoveCell $pad={8} $sel={sel}>{m[0]}</MoveCell>
                  <Cell $pad={4}>{m[1]}</Cell>
                  <ResultCell $sel={sel}>
                    <ResultFill $sel={sel} style={{ width: `${m[2]}%` }} />
                    <ResultText>{m[2]}%</ResultText>
                  </ResultCell>
                  <Cell $pad={4}>{m[3]}</Cell>
                  <DateCell $pad={4}>{m[4]}</DateCell>
                  <Cell $pad={5}>{m[5]}</Cell>
                  <Cell $pad={5}>{m[6]}</Cell>
                  <PctCell>{m[7]}</PctCell>
                  <Cell />
                </Row>
              );
            })}
          </Rows>
          <Splitter />
        </Panel>
      </Main>

      <StatusBar>
        <Progress>100%<ProgressTrack /></Progress>
      </StatusBar>
    </Page>
  );
}
